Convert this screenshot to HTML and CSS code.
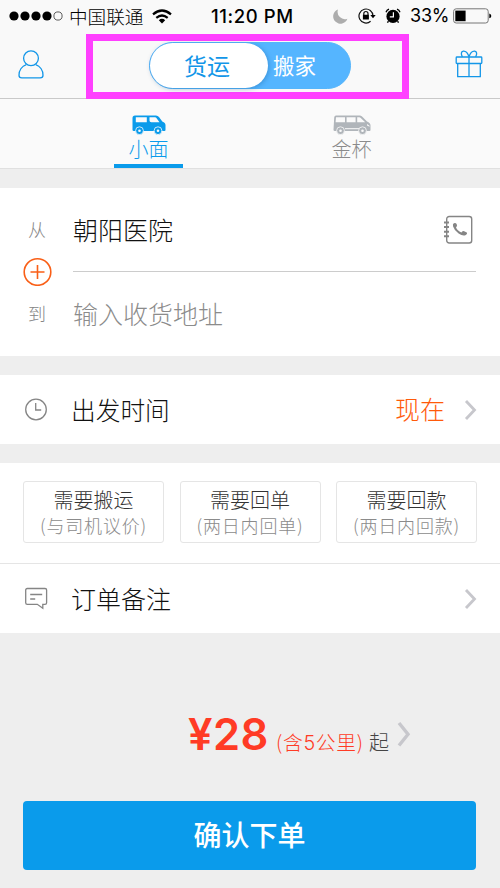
FILE: index.html
```html
<!DOCTYPE html>
<html lang="zh-CN">
<head>
<meta charset="utf-8">
<title>货运</title>
<link rel="stylesheet" href="styles.css">
</head>
<body>
<header class="status">
  <svg class="signal" width="54" height="12" viewBox="0 0 54 12"><g fill="#000"><circle cx="5" cy="6" r="4.6"/><circle cx="16" cy="6" r="4.6"/><circle cx="27" cy="6" r="4.6"/><circle cx="38" cy="6" r="4.6"/></g><circle cx="49" cy="6" r="4.1" fill="none" stroke="#333" stroke-width=".8"/></svg>
  <span class="carrier">中国联通</span>
  <svg class="wifi" width="20" height="15" viewBox="0 0 20 15"><g fill="none" stroke="#000" stroke-width="2.2"><path d="M1 5.3Q10-2.3 19 5.3"/><path d="M4.3 8.8Q10 4.2 15.7 8.8"/></g><path d="M6.8 11.2Q10 8.5 13.2 11.2L10 14.4Z"/></svg>
  <span class="clock">11:20 PM</span>
  <svg class="moon" width="15" height="15" viewBox="0 0 15 15"><path d="M5 .5A7.3 7.3 0 1 0 14.4 9.7 7.3 7.3 0 0 1 5 .5Z" fill="#adadad"/></svg>
  <svg class="lock" width="18" height="16" viewBox="0 0 18 16"><g fill="none" stroke="#111" stroke-width="1.2"><path d="M12.6 13.300A7 7 0 1 1 15 8"/><path d="M5.800 7V5.600a2.100 2.100 0 0 1 4.200 0V7"/></g><path d="M4.900 6.800h6v4.600h-6zM12.300 7h5.400L15 10.200z"/></svg>
  <svg class="alarm" width="16" height="16" viewBox="0 0 16 16"><circle cx="8" cy="8.400" r="6.600"/><path d="M1 4.200Q1.800 2 4 1.200M15 4.200Q14.200 2 12 1.200" fill="none" stroke="#000" stroke-width="1.300"/><path d="M3.500 13.200 2.400 14.600M12.500 13.200 13.600 14.600" stroke="#000" stroke-width="1.400"/><path d="M8.400 4.200v4.600H4.800" fill="none" stroke="#fff" stroke-width="1.200"/></svg>
  <span class="percent">33%</span>
  <svg class="battery" width="39" height="16" viewBox="0 0 39 16"><rect x=".6" y=".8" width="34.6" height="14.2" rx="2.6" fill="none" stroke="#777"/><path d="M2.3 2.6h10.3v10.6H2.3z"/><path d="M36.3 5.5q2 .6 2 2.4t-2 2.4z"/></svg>
</header>
<nav class="nav">
  <svg class="user" width="26" height="29" viewBox="0 0 26 29"><g fill="none" stroke="#1296e8" stroke-width="1.3"><circle cx="13" cy="8.3" r="7.4"/><path d="M8.3 14.6C4 16.2 1 20.5 1 25.2q0 2.6 2.8 2.6h18.4q2.8 0 2.8-2.6c0-4.7-3-9-7.3-10.6"/></g></svg>
  <div class="highlight"><div class="toggle"><span class="on">货运</span><span class="off">搬家</span></div></div>
  <svg class="gift" width="28" height="28" viewBox="0 0 28 28"><g fill="none" stroke="#1296e8" stroke-width="1.3"><rect x="1.2" y="7" width="25.6" height="6.5" rx=".8"/><path d="M2.7 13.5v13.2h22.6V13.5M14 7v19.7M14 6.8C12.8 3 10.5.9 8.3 1.1 6 1.4 5.8 4.2 7.4 6.8M14 6.8C15.2 3 17.5.9 19.7 1.1c2.3.3 2.5 3.1.9 5.7"/></g></svg>
</nav>
<div class="tabs">
  <div class="tab active">
    <svg width="34" height="20" viewBox="0 0 34 20"><path fill="currentColor" fill-rule="evenodd" d="M3 .5h21q1.8 0 3 1.500l3.300 4.500q3.200 1.200 3.200 3.800v4.800q0 1-1 1H1.800Q.5 16.100 .5 14.800V3Q.5.5 3 .5ZM3.800 2.300v5h11V2.300ZM17.500 2.300v3.200q0 1.800 1.800 1.800h8.200L24.200 2.800q-.4-.5-1-.5Z"/><g fill="currentColor" stroke="#fafafa" stroke-width=".8"><circle cx="7.500" cy="15.700" r="3.900"/><circle cx="26" cy="15.700" r="3.900"/></g><g fill="#fafafa"><circle cx="7.500" cy="15.700" r="1.300"/><circle cx="26" cy="15.700" r="1.300"/></g></svg>
    <span>小面</span>
  </div>
  <div class="tab">
    <svg width="38" height="20" viewBox="0 0 38 20"><path fill="#b0b5ba" fill-rule="evenodd" d="M3 .5h23.500q1.500 0 2.800 1.300L34 6.500q3.500 1.500 3.500 4v4.600q0 1-1 1H1.800Q.5 16.100 .5 14.800L1.200 2.500Q1.400.5 3 .5ZM3 2.200 2.600 7.300H12V2.200ZM13.600 2.200v5.100h9V2.200ZM24.200 2.200v5.100h8L27.500 2.700q-.5-.5-1.200-.5Z"/><path d="M12 13.700h14" stroke="#fafafa"/><g fill="#b0b5ba" stroke="#fafafa" stroke-width=".8"><circle cx="7.500" cy="15.700" r="3.900"/><circle cx="29.500" cy="15.700" r="3.900"/></g><g fill="#fafafa"><circle cx="7.500" cy="15.700" r="1.300"/><circle cx="29.500" cy="15.700" r="1.300"/><path d="m34 9 2.500 1.800v1L34 10.500z"/></g></svg>
    <span>金杯</span>
  </div>
</div>
<main>
  <section class="card route">
    <div class="stop"><span class="label">从</span><span class="place">朝阳医院</span>
      <svg class="book" width="30" height="30" viewBox="0 0 30 30"><g fill="none" stroke="#858585" stroke-width="1.400"><rect x="3.700" y="1.500" width="25" height="26.500" rx="2.500"/><path d="M1 7.500h5M1 12h5M1 16.700h5M1 21.300h5" stroke-width="2"/></g><path d="M10.800 8.300q2.400-1.200 3.200 1.600.3 1.200-1 2.300 1.200 3.600 5.400 5.300 1.600-2 3.300-1.100l2 1.100q1.200 1.200-1.300 2.800-2.800 1-6.800-1.700-4.200-2.800-5.500-7-.7-2.500.7-3.300Z" fill="#858585"/></svg>
    </div>
    <div class="divider"><svg width="29" height="29" viewBox="0 0 29 29"><g fill="none" stroke="#f95f17" stroke-width="1.600"><circle cx="14.500" cy="15" r="13.300"/><path d="M7.500 15h14M14.500 8v14"/></g></svg><i></i></div>
    <div class="stop"><span class="label">到</span><span class="place hint">输入收货地址</span></div>
  </section>
  <section class="card row time">
    <svg class="icon" width="23" height="23" viewBox="0 0 23 23"><g fill="none" stroke="#858585" stroke-width="1.300"><circle cx="11" cy="11.500" r="10.300"/><path d="M10.700 5v7h5.500"/></g></svg>
    <span class="title">出发时间</span><span class="now">现在</span>
    <svg class="chevron" width="13" height="21" viewBox="0 0 13 21"><path d="m2 2 8.500 9L2 20" fill="none" stroke="#c7c7cc" stroke-width="2.800"/></svg>
  </section>
  <section class="card">
    <div class="options">
      <div class="option"><b>需要搬运</b><span>(与司机议价)</span></div>
      <div class="option"><b>需要回单</b><span>(两日内回单)</span></div>
      <div class="option"><b>需要回款</b><span>(两日内回款)</span></div>
    </div>
    <div class="row">
      <svg class="icon" width="23" height="23" viewBox="0 0 23 23"><g fill="none" stroke="#858585" stroke-width="1.300"><path d="M2.300 1.500H20q1.600 0 1.600 1.600v12.600q0 1.600-1.600 1.600h-2.200v4l-5.500-4h-10Q.7 17.300.7 15.700V3.100q0-1.600 1.600-1.600Z"/><path d="M5.200 7.500h12M5.200 12h5"/></g></svg>
      <span class="title note">订单备注</span>
      <svg class="chevron" width="13" height="21" viewBox="0 0 13 21"><path d="m2 2 8.500 9L2 20" fill="none" stroke="#c7c7cc" stroke-width="2.800"/></svg>
    </div>
  </section>
  <div class="price">
    <span class="amount">¥28</span><span class="range">(含<span class="km">5</span>公里)</span><span class="from">起</span>
    <svg width="14" height="26" viewBox="0 0 14 26"><path d="m2 2 9 11.300L2 24.500" fill="none" stroke="#c7c7cc" stroke-width="3.400"/></svg>
  </div>
  <div class="confirm">确认下单</div>
</main>
</body>
</html>
```

FILE: styles.css
```css
* { box-sizing: border-box; }
body {
  margin: 0;
  width: 500px;
  height: 888px;
  overflow: hidden;
  background: #eee;
  color: #111;
  font-family: "Noto Sans CJK SC", sans-serif;
  font-weight: 300;
  white-space: nowrap;
}
svg { display: block; flex: none; }
.status { display: flex; align-items: center; height: 32px; padding-left: 9px; background: #f9f9f9; color: #000; line-height: 32px; }
.carrier { width: 75px; margin-left: 6px; font-size: 18.600px; }
.wifi { margin-left: 8px; }
.clock { width: 85px; margin-left: 39px; font: 500 18.500px/32px Inter, sans-serif; letter-spacing: .6px; }
.moon { margin-left: 37px; }
.lock { margin-left: 10px; }
.alarm { margin-left: 9px; }
.percent { width: 38px; margin-left: 9px; font: 400 18px/32px Inter, sans-serif; letter-spacing: -.2px; }
.battery { margin-left: 5px; }
.nav { display: flex; align-items: flex-start; height: 67px; padding: 2px 17px 0 18px; background: #f9f9f9; border-bottom: 1px solid #c9c9c9; }
.user { margin-top: 16px; }
.highlight { flex: none; width: 323px; height: 65px; margin: 0 46px 0 42px; padding: 1px 0 0 56px; border: 7px solid #ff40ff; }
.toggle { display: flex; width: 202px; height: 47px; border: 1px solid #55b5fb; border-radius: 24px; background: #55b5ff; line-height: 45px; }
.on { width: 118px; height: 45px; padding-left: 34px; border-radius: 23px; background: #fff; color: #1296e8; font-size: 23px; font-weight: 400; box-shadow: 1px 1px 5px rgba(0, 70, 130, .3); }
.off { padding-left: 5px; color: #fff; font-size: 21.500px; font-weight: 400; line-height: 44px; }
.gift { margin-top: 16px; }
.tabs { display: flex; justify-content: space-between; height: 70px; padding: 0 114px; background: #fafafa; border-bottom: 1px solid #e0e0e0; }
.tab { display: flex; flex-direction: column; align-items: center; width: 69px; height: 69px; padding-top: 16px; color: #8b8b8b; font-size: 20px; line-height: 27px; }
.active { color: #0a9beb; border-bottom: 4px solid #0a9beb; }
.card { margin-top: 19px; background: #fff; }
.route { height: 168px; padding: 17px 24px 0 23px; }
.stop { display: flex; align-items: center; height: 49px; }
.label { width: 50px; padding-left: 5px; color: #858585; font-size: 18px; line-height: 49px; }
.place { flex: 1; font-size: 25px; line-height: 49px; }
.hint { color: #8b8b8b; }
.book { margin-right: 3px; }
.divider { display: flex; align-items: center; gap: 21px; height: 35px; }
.divider i { flex: 1; height: 1px; background: #ccc; }
.row { display: flex; align-items: center; height: 69px; padding: 0 23px 0 25px; }
.title { flex: 1; margin-left: 23px; font-size: 24.700px; line-height: 69px; }
.note { font-size: 25px; }
.now { height: 69px; margin-right: 19px; color: #ff5a0a; font-size: 25px; line-height: 67px; }
.options { display: grid; grid-template-columns: repeat(3, 141px); justify-content: space-between; height: 101px; padding: 18px 23px 0; border-bottom: 1px solid #e5e5e5; }
.option { display: flex; flex-direction: column; align-items: center; height: 62px; padding-top: 5px; border: 1px solid #e5e5e5; border-radius: 3px; }
.option b { color: #333; font-size: 20px; font-weight: 300; line-height: 26px; }
.option span { color: #8b8b8b; font-size: 18px; line-height: 24px; letter-spacing: .8px; }
.price { display: flex; align-items: baseline; height: 68px; margin-top: 67px; padding-left: 188px; line-height: 68px; color: #ff3b25; }
.amount { width: 82px; font: 600 43.500px/68px Inter, sans-serif; letter-spacing: .4px; }
.range { width: 88px; margin-left: 6px; font-size: 19.800px; letter-spacing: .7px; }
.km { font-family: Inter, sans-serif; }
.from { margin-left: 5px; color: #444; font-size: 20px; }
.price svg { align-self: flex-start; margin: 21px 0 0 8px; }
.confirm { height: 69px; margin: 33px 24px 0 23px; border-radius: 4px; background: #0a9beb; color: #fff; font-size: 28px; font-weight: 500; line-height: 67px; text-align: center; }
```
